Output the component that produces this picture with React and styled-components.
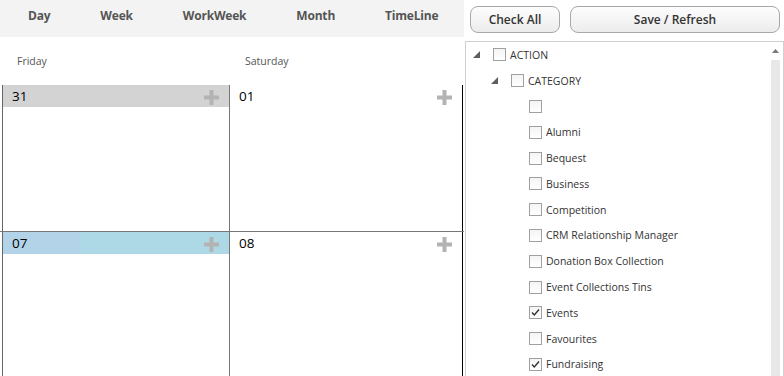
import React from "react"
import styled, { createGlobalStyle } from "styled-components"

const GlobalStyle = createGlobalStyle`
  html, body {
    margin: 0;
    padding: 0;
    background: #fff;
    font-family: "Open Sans", "Noto Sans", sans-serif;
  }
`

const Shell = styled.div`
  display: flex;
  width: 784px;
  height: 376px;
  overflow: hidden;
  background: #fff;
`

const LeftPane = styled.div`
  width: 464px;
  display: flex;
  flex-direction: column;
  & > * {
    flex-shrink: 0;
  }
`

const Toolbar = styled.div`
  height: 37px;
  background: #f3f3f3;
  display: flex;
  align-items: center;
  padding-left: 3px;
`

const ViewTab = styled.div`
  padding: 0 25px;
  font-size: 12px;
  font-weight: 700;
  color: #555;
  letter-spacing: -0.2px;
  padding-bottom: 7px;
`

const DayNames = styled.div`
  height: 48px;
  display: flex;
  align-items: center;
  padding-left: 2px;
`

const DayName = styled.div`
  width: ${({ w }) => w}px;
  padding-left: 15px;
  box-sizing: border-box;
  font-size: 10.5px;
  color: #555;
`

const Week = styled.div`
  display: flex;
  height: ${({ h }) => h}px;
  padding-left: 2px;
  border-top: ${({ top }) => (top ? "1px solid #777" : "none")};
`

const Cell = styled.div`
  width: ${({ w }) => w}px;
  border-left: ${({ first }) => (first ? "1px solid #666" : "none")};
  border-right: 1px solid ${({ last }) => (last ? "#000" : "#777")};
`

const CellHeader = styled.div`
  height: 22px;
  display: flex;
  align-items: center;
  justify-content: space-between;
  padding: 0 10px 0 9px;
  background: ${({ bg }) => bg || "transparent"};
`

const DateNum = styled.span`
  font-family: "Open Sans", "Noto Sans", sans-serif;
  font-size: 13.5px;
  color: #000;
  margin-top: 0;
`

const Plus = styled.svg`
  width: 15px;
  height: 15px;
  display: block;
  margin-top: 3px;
`

const RightPane = styled.div`
  flex: 1;
  display: flex;
  flex-direction: column;
`

const ButtonRow = styled.div`
  display: flex;
  gap: 10px;
  padding: 6px 0 0 6px;
`

const Button = styled.button`
  width: ${({ w }) => w}px;
  height: 27px;
  border: 1px solid #a8a8a8;
  border-radius: 8px;
  background: linear-gradient(#fdfdfd, #ececec);
  font-family: "Open Sans", "Noto Sans", sans-serif;
  font-size: 12px;
  font-weight: 600;
  color: #333;
  padding: 0;
`

const TreePanel = styled.div`
  flex: 1;
  display: flex;
  margin: 8px 0 0 1px;
  border: 1px solid #d0d0d0;
  border-bottom: none;
`

const TreeList = styled.div`
  flex: 1;
  padding-left: 7px;
`

const TreeRow = styled.div`
  height: 25.8px;
  display: flex;
  align-items: center;
  padding-left: ${({ level }) => level * 18}px;
  font-size: 10.5px;
  color: #333;
`

const Expander = styled.span`
  width: 20px;
  display: flex;
  align-items: center;
`

const Box = styled.span`
  width: 11px;
  height: 11px;
  border: 1px solid #a0a0a0;
  background: linear-gradient(#f4f4f4, #fff);
  margin-right: 4px;
  display: flex;
  align-items: center;
  justify-content: center;
`

const Scrollbar = styled.div`
  width: 14px;
  display: flex;
  flex-direction: column;
  align-items: center;
  padding-right: 1px;
`

const ScrollUp = styled.div`
  height: 17px;
  display: flex;
  align-items: center;
  justify-content: center;
  width: 100%;
`

const Thumb = styled.div`
  flex: 1;
  width: 9px;
  background: #e8e8e8;
  margin-top: 1px;
`

const PlusIcon = () => (
  <Plus viewBox="0 0 15 15">
    <rect x="5.5" y="0" width="4" height="15" fill="#b3b3b3" />
    <rect x="0" y="5.5" width="15" height="4" fill="#b3b3b3" />
  </Plus>
)

const Triangle = () => (
  <svg width="7" height="7" viewBox="0 0 7 7">
    <polygon points="7,0 7,7 0,7" fill="#5e5e5e" />
  </svg>
)

const Check = () => (
  <svg width="9" height="9" viewBox="0 0 9 9">
    <path d="M1 4.5 L3.3 7 L8 1.5" stroke="#333" strokeWidth="1.4" fill="none" />
  </svg>
)

const tabs = ["Day", "Week", "WorkWeek", "Month", "TimeLine"]

const categories = [
  ["", false],
  ["Alumni", false],
  ["Bequest", false],
  ["Business", false],
  ["Competition", false],
  ["CRM Relationship Manager", false],
  ["Donation Box Collection", false],
  ["Event Collections Tins", false],
  ["Events", true],
  ["Favourites", false],
  ["Fundraising", true],
]

const weeks = [
  { h: 146, days: [{ n: "31", bg: "#d3d3d3" }, { n: "01" }] },
  {
    h: 160,
    top: true,
    days: [
      { n: "07", bg: "linear-gradient(to right, #b3d3e8 0 78px, #add8e6 78px 100%)" },
      { n: "08" },
    ],
  },
]

const widths = [226, 232]

export default function App() {
  return (
    <Shell>
      <GlobalStyle />
      <LeftPane>
        <Toolbar>
          {tabs.map((t) => (
            <ViewTab key={t}>{t}</ViewTab>
          ))}
        </Toolbar>
        <DayNames>
          <DayName w={228}>Friday</DayName>
          <DayName w={233}>Saturday</DayName>
        </DayNames>
        {weeks.map((wk, i) => (
          <Week key={i} h={wk.h} top={wk.top}>
            {wk.days.map((d, j) => (
              <Cell key={d.n} w={widths[j]} first={j === 0} last={j === 1}>
                <CellHeader bg={d.bg}>
                  <DateNum>{d.n}</DateNum>
                  <PlusIcon />
                </CellHeader>
              </Cell>
            ))}
          </Week>
        ))}
      </LeftPane>
      <RightPane>
        <ButtonRow>
          <Button w={90}>Check All</Button>
          <Button w={210}>Save / Refresh</Button>
        </ButtonRow>
        <TreePanel>
          <TreeList>
            <TreeRow level={0}>
              <Expander><Triangle /></Expander>
              <Box />
              ACTION
            </TreeRow>
            <TreeRow level={1}>
              <Expander><Triangle /></Expander>
              <Box />
              CATEGORY
            </TreeRow>
            {categories.map(([label, checked], i) => (
              <TreeRow key={i} level={2}>
                <Expander />
                <Box>{checked && <Check />}</Box>
                {label}
              </TreeRow>
            ))}
          </TreeList>
          <Scrollbar>
            <ScrollUp>
              <svg width="7" height="4" viewBox="0 0 7 4">
                <polygon points="3.5,0 7,4 0,4" fill="#777" />
              </svg>
            </ScrollUp>
            <Thumb />
          </Scrollbar>
        </TreePanel>
      </RightPane>
    </Shell>
  )
}
